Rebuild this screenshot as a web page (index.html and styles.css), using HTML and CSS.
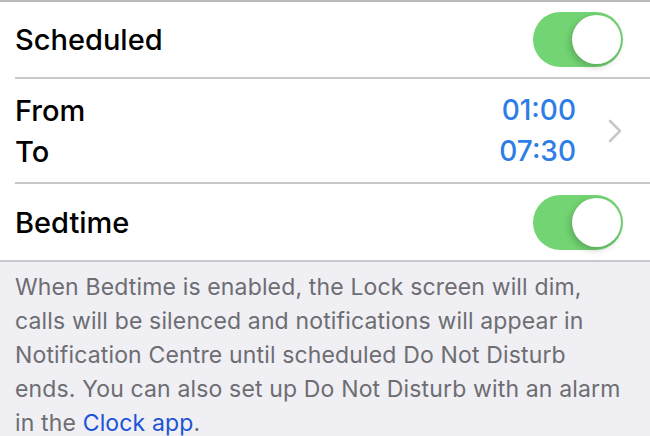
FILE: index.html
```html
<!DOCTYPE html>
<html lang="en">
<head>
    <meta charset="UTF-8">
    <meta name="viewport" content="width=device-width, initial-scale=1.0">
    <title>Do Not Disturb</title>
    <link rel="stylesheet" href="styles.css">
</head>
<body>
    <div class="group">
        <div class="row">
            <span class="label">Scheduled</span>
            <span class="switch on"><span class="knob"></span></span>
        </div>
        <div class="row row-times">
            <div class="labels">
                <span class="label">From</span>
                <span class="label">To</span>
            </div>
            <div class="times">
                <span class="time">01:00</span>
                <span class="time">07:30</span>
            </div>
            <svg class="chevron" width="14" height="24" viewBox="0 0 14 24">
                <path d="M2 2 L12 12 L2 22" fill="none" stroke="#c7c7cc" stroke-width="2.6" stroke-linecap="round" stroke-linejoin="round"/>
            </svg>
        </div>
        <div class="row">
            <span class="label">Bedtime</span>
            <span class="switch on"><span class="knob"></span></span>
        </div>
    </div>
    <p class="footer">
        When Bedtime is enabled, the Lock screen will dim, calls will be silenced and notifications will appear in Notification Centre until scheduled Do Not Disturb ends. You can also set up Do Not Disturb with an alarm in the <a href="#" class="link">Clock app</a>.
    </p>
</body>
</html>
```

FILE: styles.css
```css
/* Settings list */
body {
    margin: 0;
    padding: 0;
    font-family: 'Inter', 'Liberation Sans', sans-serif;
    background: #efeff4;
    color: #000000;
    height: 100vh;
    overflow: hidden;
}

.group {
    background: #ffffff;
    border-top: 2px solid #b9b9bd;
    border-bottom: 2px solid #c8c7cc;
    padding-left: 15px;
}

.row {
    display: flex;
    align-items: center;
    justify-content: space-between;
    height: 75px;
    padding-right: 27px;
    border-bottom: 2px solid #c8c7cc;
}

.row:last-child {
    border-bottom: none;
    height: 76px;
}

.label {
    font-size: 29px;
    font-weight: 500;
}

.row-times {
    height: 103px;
    padding-right: 28px;
}

.labels,
.times {
    display: flex;
    flex-direction: column;
    gap: 4px;
}

.times {
    margin-left: auto;
    align-items: flex-end;
}

.time {
    font-size: 28px;
    font-weight: 500;
    color: #2f7de6;
    line-height: 37px;
}

.labels .label {
    line-height: 37px;
}

.chevron {
    margin-left: 32px;
}

/* Toggle switch */
.switch {
    position: relative;
    width: 90px;
    height: 55px;
    border-radius: 28px;
    background: #72d472;
}

.switch .knob {
    position: absolute;
    top: 3px;
    right: 2px;
    width: 49px;
    height: 49px;
    border-radius: 50%;
    background: #ffffff;
    box-shadow: -2px 3px 7px rgba(0, 0, 0, 0.2), 0 0 1px rgba(0, 0, 0, 0.1);
}

/* Footer note */
.footer {
    margin: 0;
    width: 615px;
    padding: 8px 15px 0 15px;
    font-size: 23px;
    letter-spacing: 0.15px;
    line-height: 34px;
    color: #6d6d72;
}

.link {
    color: #1d54d6;
    text-decoration: none;
}
```
